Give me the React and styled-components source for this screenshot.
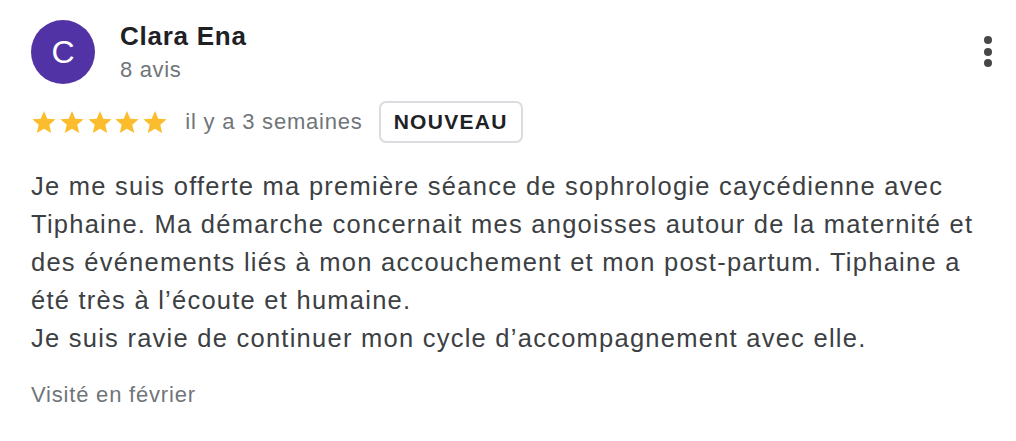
import React from "react";
import styled, { createGlobalStyle } from "styled-components";

const Global = createGlobalStyle`
  html, body { margin: 0; padding: 0; background: #fff; }
  body { font-family: "Liberation Sans", Arial, sans-serif; }
`;

const Card = styled.div`
  width: 1016px;
  height: 441px;
  box-sizing: border-box;
  padding: 20px 22px 0 31px;
  display: flex;
  flex-direction: column;
  background: #fff;
`;

const Header = styled.div`
  display: flex;
  align-items: flex-start;
`;

const Avatar = styled.div`
  width: 64px;
  height: 64px;
  border-radius: 50%;
  background: #5133a5;
  color: #fff;
  display: flex;
  align-items: center;
  justify-content: center;
  font-size: 32px;
  flex-shrink: 0;
`;

const Who = styled.div`
  margin-left: 25px;
  display: flex;
  flex-direction: column;
  flex: 1;
`;

const Name = styled.div`
  font-size: 26px;
  font-weight: 700;
  color: #202124;
  line-height: 32px;
  letter-spacing: 0.75px;
`;

const Count = styled.div`
  font-size: 22px;
  color: #70757a;
  line-height: 28px;
  letter-spacing: 0.65px;
  margin-top: 4px;
`;

const Menu = styled.button`
  border: 0;
  background: none;
  padding: 0;
  margin-top: 16px;
  width: 12px;
  display: flex;
  flex-direction: column;
  align-items: center;
  gap: 3.5px;
`;

const Dot = styled.span`
  width: 8px;
  height: 8px;
  border-radius: 50%;
  background: #474747;
`;

const Meta = styled.div`
  display: flex;
  align-items: center;
  margin-top: 17px;
`;

const Stars = styled.div`
  display: flex;
  gap: 1.8px;
`;

const When = styled.span`
  font-size: 22px;
  color: #70757a;
  letter-spacing: 0.8px;
  margin-left: 17px;
`;

const Badge = styled.span`
  margin-left: 16px;
  height: 42px;
  box-sizing: border-box;
  padding: 0 13px;
  border: 2px solid #dadce0;
  border-radius: 7px;
  display: flex;
  align-items: center;
  font-size: 21px;
  font-weight: 700;
  color: #202124;
  letter-spacing: 1.3px;
`;

const Body = styled.p`
  margin: 24px 0 0;
  font-size: 25.5px;
  line-height: 38px;
  letter-spacing: 1.25px;
  color: #3c4043;
`;

const Visit = styled.div`
  margin-top: 25px;
  font-size: 22px;
  letter-spacing: 0.8px;
  color: #70757a;
`;

const Star = () => (
  <svg width="26" height="26" viewBox="0 0 24 24">
    <path
      fill="#fbbc2d"
      d="M12 1.8l3.05 7.1 7.7.65-5.85 5.05 1.75 7.5L12 18.15 5.35 22.1l1.75-7.5L1.25 9.55l7.7-.65z"
    />
  </svg>
);

export default function App() {
  return (
    <>
      <Global />
      <Card>
        <Header>
          <Avatar>C</Avatar>
          <Who>
            <Name>Clara Ena</Name>
            <Count>8 avis</Count>
          </Who>
          <Menu aria-label="Plus">
            <Dot />
            <Dot />
            <Dot />
          </Menu>
        </Header>
        <Meta>
          <Stars>
            <Star />
            <Star />
            <Star />
            <Star />
            <Star />
          </Stars>
          <When>il y a 3 semaines</When>
          <Badge>NOUVEAU</Badge>
        </Meta>
        <Body>
          Je me suis offerte ma première séance de sophrologie caycédienne avec
          <br />
          Tiphaine. Ma démarche concernait mes angoisses autour de la maternité et
          <br />
          des événements liés à mon accouchement et mon post-partum. Tiphaine a
          <br />
          été très à l’écoute et humaine.
          <br />
          Je suis ravie de continuer mon cycle d’accompagnement avec elle.
        </Body>
        <Visit>Visité en février</Visit>
      </Card>
    </>
  );
}
